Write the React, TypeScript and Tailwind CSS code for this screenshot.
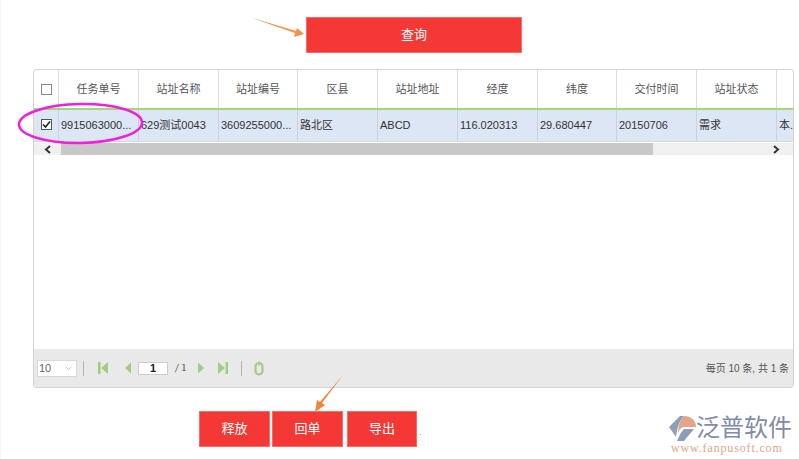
const font = { fontFamily: '"Liberation Sans","Noto Sans CJK SC",sans-serif' };
const cols = [
  { w: 'w-[80px]', h: '任务单号', v: '9915063000...' },
  { w: 'w-[80px]', h: '站址名称', v: '629测试0043' },
  { w: 'w-[79px]', h: '站址编号', v: '3609255000...' },
  { w: 'w-[80px]', h: '区县', v: '路北区' },
  { w: 'w-[80px]', h: '站址地址', v: 'ABCD' },
  { w: 'w-[80px]', h: '经度', v: '116.020313' },
  { w: 'w-[79px]', h: '纬度', v: '29.680447' },
  { w: 'w-[80px]', h: '交付时间', v: '20150706' },
  { w: 'w-[80px]', h: '站址状态', v: '需求' },
];

function Btn({ w, children }: { w: string; children: string }) {
  return (
    <div className={`${w} h-[36px] bg-[#f33835] text-white text-[13px] flex items-center justify-center border border-[#f76a66]`}>
      {children}
    </div>
  );
}

function Pager({ d }: { d: string }) {
  return (
    <svg width="12" height="14" viewBox="0 0 12 14" className="shrink-0">
      <path d={d} fill="#9fce82" />
    </svg>
  );
}

function Logo() {
  return (
    <div className="absolute left-[669px] top-[414px] w-[130px] h-[45px]">
      <svg width="30" height="30" viewBox="0 0 30 30" className="absolute left-0 top-[1px]">
        <path d="M15 1 L11 1 L0 12 L7 22 C8 14 10 6 15 1Z" fill="#8e9db8" />
        <path d="M15 1 C22 1 27 5 27 12 L15 12 C12 12 10 15 9 19 C9 11 11 5 15 1Z" fill="#e3a585" />
        <path d="M15 14 L25 14 L15 26 L8 26 C10 21 12 17 15 14Z" fill="#8e9db8" />
      </svg>
      <div className="absolute left-[27px] top-[-1px] text-[24px] leading-[30px] text-[#7f8da8] whitespace-nowrap">泛普软件</div>
      <div className="absolute left-[2px] top-[27px] text-[12px] leading-[14px] tracking-[0.85px] text-[#e3a585] whitespace-nowrap" style={{ fontFamily: '"Liberation Serif",serif' }}>
        www.fanpusoft.com
      </div>
    </div>
  );
}

export default function App() {
  return (
    <div className="relative w-[799px] h-[459px] bg-white overflow-hidden pt-[17px]" style={font}>
      <div className="absolute left-0 top-0 bottom-0 w-px bg-[#f5f5f5]" />
      <div className="flex pl-[306px]">
        <Btn w="w-[216px]">查询</Btn>
      </div>

      <div className="ml-[33px] mt-[16px] w-[761px] h-[319px] border border-[#d4d4d4] rounded-[3px] flex flex-col overflow-hidden">
        <div className="flex h-[38px] shrink-0 text-[11px] text-[#555] border-b-2 border-[#a4d67c] box-content">
          <div className="w-[25px] border-r border-[#dcdcdc] flex items-center justify-center shrink-0">
            <div className="w-[11px] h-[11px] border border-[#888] bg-white" />
          </div>
          {cols.map((c) => (
            <div key={c.h} className={`${c.w} shrink-0 border-r border-[#dcdcdc] flex items-center justify-center`}>{c.h}</div>
          ))}
          <div className="flex-1" />
        </div>
        <div className="flex h-[32px] shrink-0 bg-[#dde6f5] text-[11px] text-[#333] border-b border-[#d5d9e0]">
          <div className="w-[25px] border-r border-[#c9d2e0] flex items-center justify-center shrink-0">
            <div className="w-[11px] h-[11px] border border-[#555] bg-white flex items-center justify-center -translate-y-px">
              <svg width="9" height="9" viewBox="0 0 9 9"><path d="M1 4.5 L3.5 7 L8 1.5" fill="none" stroke="#222" strokeWidth="1.6" /></svg>
            </div>
          </div>
          {cols.map((c) => (
            <div key={c.h} className={`${c.w} shrink-0 border-r border-[#c9d2e0] flex items-center pl-[2px] whitespace-nowrap overflow-hidden`}>{c.v}</div>
          ))}
          <div className="flex-1 flex items-center pl-[2px] whitespace-nowrap">本.</div>
        </div>
        <div className="flex h-[12px] shrink-0 mt-[1px] bg-[#f0f0f0] items-center">
          <div className="w-[27px] h-full flex items-center justify-center">
            <svg width="8" height="9" viewBox="0 0 8 9"><path d="M6 1 L2 4.5 L6 8" fill="none" stroke="#333" strokeWidth="2" /></svg>
          </div>
          <div className="w-[592px] h-full bg-[#c8c8c8]" />
          <div className="flex-1 flex justify-end pr-[13px]">
            <svg width="8" height="9" viewBox="0 0 8 9"><path d="M2 1 L6 4.5 L2 8" fill="none" stroke="#333" strokeWidth="2" /></svg>
          </div>
        </div>
        <div className="flex-1" />
        <div className="h-[38px] shrink-0 bg-[#e9e9e9] flex items-center pl-[3px] pr-[4px] text-[11px] text-[#555]">
          <div className="w-[40px] h-[17px] border border-[#d8d8d8] bg-white flex items-center justify-between pl-[1px] pr-[4px] text-[11px] text-[#666]">
            <span>10</span>
            <svg width="7" height="5" viewBox="0 0 7 5"><path d="M0.5 0.5 L3.5 3.5 L6.5 0.5" fill="none" stroke="#ccc" /></svg>
          </div>
          <div className="w-px h-[15px] bg-[#b5b5b5] ml-[6px] mr-[13px]" />
          <Pager d="M1 1 H3.5 V13 H1Z M11 1 V13 L4 7Z" />
          <div className="w-[13px]" />
          <Pager d="M9 1.5 V12.5 L3 7Z" />
          <div className="w-[4px]" />
          <div className="w-[30px] h-[13px] border border-[#ccc] bg-white text-[11px] text-[#222] font-bold flex items-center justify-center leading-none">1</div>
          <span className="ml-[6px] font-serif">/ 1</span>
          <div className="w-[9px]" />
          <Pager d="M3 1.5 V12.5 L9 7Z" />
          <div className="w-[10px]" />
          <Pager d="M1 1 V13 L8 7Z M8.5 1 H11 V13 H8.5Z" />
          <div className="w-px h-[15px] bg-[#b5b5b5] ml-[12px] mr-[12px]" />
          <svg width="10" height="15" viewBox="0 0 10 15"><rect x="1.5" y="2" width="7" height="11.5" rx="3.5" fill="none" stroke="#9fce82" strokeWidth="2.2" /><path d="M5 0.5 V5" stroke="#9fce82" strokeWidth="1.5" /></svg>
          <span className="ml-auto text-[10px] text-[#555]">每页 10 条, 共 1 条</span>
        </div>
      </div>

      <div className="flex pl-[199px] mt-[23px] gap-[2px]">
        <Btn w="w-[71px]">释放</Btn>
        <Btn w="w-[71px]">回单</Btn>
        <div className="ml-[2px]"><Btn w="w-[70px]">导出</Btn></div>
      </div>

      <svg width="799" height="459" className="absolute left-0 top-0 pointer-events-none">
        <ellipse cx="80.5" cy="123.5" rx="61.5" ry="19.5" fill="none" stroke="#ee22dd" strokeWidth="2.5" transform="rotate(-1 80 124)" />
        <path d="M252 18 L296 31 L297 28 L304 34 L294 37 L295 33Z" fill="#f29243" />
        <path d="M343 375 L322 403 L325 405 L315 412 L317 400 L320 402Z" fill="#f28538" />
        <rect x="420" y="434" width="1" height="1" fill="#9a9ae8" />
      </svg>
      <Logo />
    </div>
  );
}
